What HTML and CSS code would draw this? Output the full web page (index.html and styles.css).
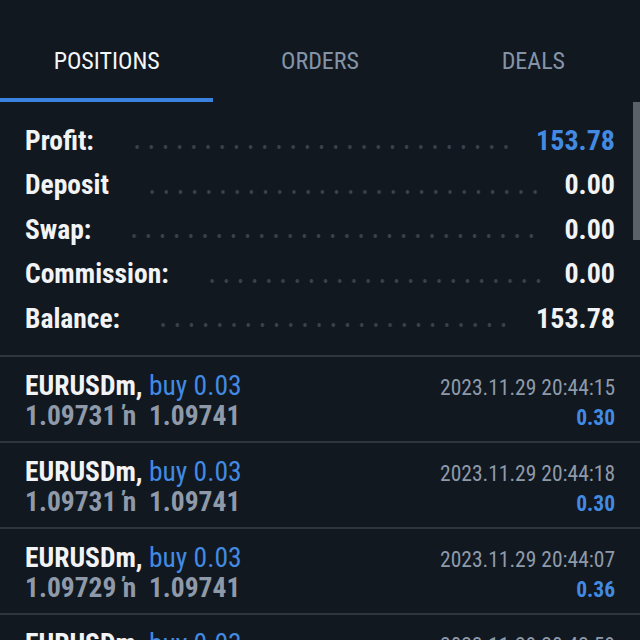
FILE: index.html
```html
<!DOCTYPE html>
<html lang="en">
<head>
    <meta charset="UTF-8">
    <title>Trade</title>
    <link rel="stylesheet" href="styles.css">
</head>
<body>
    <div class="tabs">
        <div class="tab active">POSITIONS</div>
        <div class="tab">ORDERS</div>
        <div class="tab">DEALS</div>
    </div>

    <div class="content">
        <div class="summary">
            <div class="line"><span class="label">Profit:</span><span class="dots"></span><span class="value blue">153.78</span></div>
            <div class="line"><span class="label">Deposit</span><span class="dots"></span><span class="value">0.00</span></div>
            <div class="line"><span class="label">Swap:</span><span class="dots"></span><span class="value">0.00</span></div>
            <div class="line"><span class="label">Commission:</span><span class="dots"></span><span class="value">0.00</span></div>
            <div class="line"><span class="label">Balance:</span><span class="dots"></span><span class="value">153.78</span></div>
        </div>

        <ul class="positions">
            <li class="position">
                <div class="left">
                    <div class="symbol">EURUSDm, <span class="side">buy 0.03</span></div>
                    <div class="prices">1.09731 ŉ&nbsp; 1.09741</div>
                </div>
                <div class="right">
                    <div class="time">2023.11.29 20:44:15</div>
                    <div class="pl">0.30</div>
                </div>
            </li>
            <li class="position">
                <div class="left">
                    <div class="symbol">EURUSDm, <span class="side">buy 0.03</span></div>
                    <div class="prices">1.09731 ŉ&nbsp; 1.09741</div>
                </div>
                <div class="right">
                    <div class="time">2023.11.29 20:44:18</div>
                    <div class="pl">0.30</div>
                </div>
            </li>
            <li class="position">
                <div class="left">
                    <div class="symbol">EURUSDm, <span class="side">buy 0.03</span></div>
                    <div class="prices">1.09729 ŉ&nbsp; 1.09741</div>
                </div>
                <div class="right">
                    <div class="time">2023.11.29 20:44:07</div>
                    <div class="pl">0.36</div>
                </div>
            </li>
            <li class="position">
                <div class="left">
                    <div class="symbol">EURUSDm, <span class="side">buy 0.03</span></div>
                    <div class="prices">1.09729 ŉ&nbsp; 1.09741</div>
                </div>
                <div class="right">
                    <div class="time">2023.11.29 20:43:59</div>
                    <div class="pl">0.36</div>
                </div>
            </li>
        </ul>
        <div class="scrollbar"></div>
    </div>
</body>
</html>
```

FILE: styles.css
```css
body {
    margin: 0;
    height: 640px;
    overflow: hidden;
    background-color: #111820;
    color: #f1f3f5;
    font-family: "Roboto Condensed", Roboto, sans-serif;
}
.tabs {
    display: flex;
    height: 102px;
}
.tab {
    flex: 1;
    display: flex;
    align-items: center;
    justify-content: center;
    padding-top: 24px;
    padding-bottom: 4px;
    font-size: 24px;
    color: #8494a8;
}
.tab.active {
    color: #f4f6f8;
    border-bottom: 4px solid #3b82e0;
    padding-bottom: 0;
}
.content {
    position: relative;
}
.summary {
    padding: 16px 25px 14px 25px;
}
.line {
    display: flex;
    align-items: center;
    height: 44.5px;
    font-size: 27.5px;
    font-weight: bold;
}
.value {
    font-size: 28px;
}
.dots {
    flex: 1;
    align-self: stretch;
    margin: 0 22px 0 36px;
    background-image: radial-gradient(circle, #3a424d 1.6px, transparent 2.1px);
    background-size: 14.2px 6px;
    background-repeat: repeat-x;
    background-position: left 26px;
}
.blue {
    color: #428ae2;
}
.positions {
    list-style: none;
    margin: 0;
    padding: 0;
}
.position {
    display: flex;
    justify-content: space-between;
    border-top: 2px solid #2e353e;
    padding: 14px 25px 10px 25px;
    height: 60px;
}
.symbol, .prices {
    font-size: 27.5px;
    line-height: 30px;
}
.symbol {
    font-weight: bold;
}
.side {
    font-weight: normal;
    color: #428ae2;
}
.prices {
    color: #8e9aa9;
    font-weight: bold;
}
.right {
    text-align: right;
    padding-top: 2px;
}
.time {
    font-size: 21.5px;
    line-height: 30px;
    color: #8e9aa9;
}
.pl {
    font-size: 21.5px;
    line-height: 30px;
    font-weight: bold;
    color: #428ae2;
}
.scrollbar {
    position: absolute;
    top: 0;
    right: 0;
    width: 7px;
    height: 138px;
    background-color: #5b6169;
}
```
